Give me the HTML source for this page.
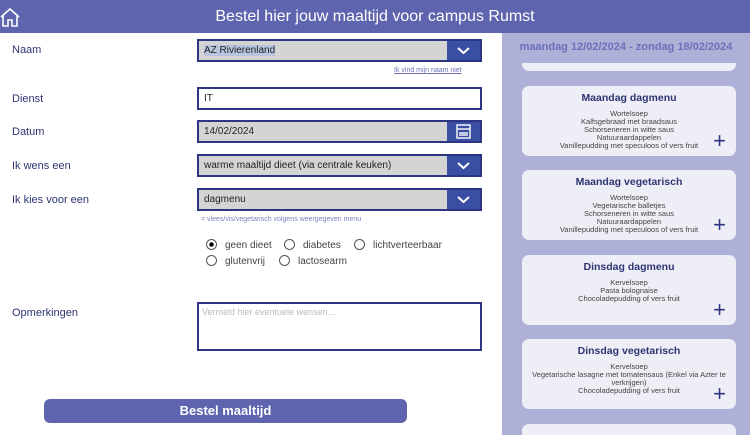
<html><head><style>
html,body{margin:0;width:750px;height:435px;overflow:hidden}
body{background:#fff;font-family:"Liberation Sans",sans-serif;position:relative}
.hdr{position:absolute;left:0;top:0;width:750px;height:33px;background:#5f64ae;color:#fff;font-size:16px;text-align:center;line-height:33px}
.lbl{position:absolute;left:12px;font-size:11px;color:#2e3572}
.box{position:absolute;left:197px;width:285px;height:23px;border:2px solid #2e3583;background:#d4d4d4;font-size:10px;line-height:19px;padding-left:5px;box-sizing:border-box;color:#222}
.btn{position:absolute;right:0;top:0;width:33px;height:19px;background:#3a4ea3}
.rp{position:absolute;left:502px;top:33px;width:248px;height:402px;background:#aeb0d8;overflow:hidden}
.card{position:absolute;left:20px;width:214px;background:#eeeef6;border-radius:7px;text-align:center;color:#444;font-size:7.5px;line-height:8px}
.card b{display:block;color:#2e3572;font-size:10.5px;margin:8px 0 8px}
.plus{position:absolute;right:10px;bottom:4px;font-size:22px;color:#2e3583;line-height:22px}
.r{position:absolute;font-size:10px;color:#444}
.r i{display:inline-block;width:9px;height:9px;border:1px solid #555;border-radius:50%;vertical-align:-2px;margin-right:8px}
</style></head><body>
<div class="hdr">Bestel hier jouw maaltijd voor campus Rumst</div>
<svg style="position:absolute;left:0;top:6px" width="20" height="22" viewBox="0 0 20 22"><path d="M1 11 L10 3 L19 11 M3 9 V20 H8 V14 H12 V20 H17 V9" fill="none" stroke="#fff" stroke-width="1.6"/></svg>
<div class="lbl" style="top:44px">Naam</div>
<div class="box" style="top:39px"><span style="background:#b8c4e0">AZ Rivierenland</span><div class="btn"><svg width="33" height="19"><path d="M11 7 L16.5 12 L22 7" stroke="#fff" stroke-width="2" fill="none"/></svg></div></div>
<div style="position:absolute;left:394px;top:67px;font-size:7px;color:#6b70b8;text-decoration:underline">Ik vind mijn naam niet</div>
<div class="lbl" style="top:93px">Dienst</div>
<div class="box" style="top:87px;background:#fff">IT</div>
<div class="lbl" style="top:126px">Datum</div>
<div class="box" style="top:120px">14/02/2024<div class="btn"><svg width="33" height="19"><rect x="10" y="3" width="13" height="13" fill="none" stroke="#fff" stroke-width="1.4"/><line x1="10" y1="7" x2="23" y2="7" stroke="#fff" stroke-width="1.4"/><rect x="12" y="10" width="9" height="4" fill="#fff" opacity=".7"/></svg></div></div>
<div class="lbl" style="top:160px">Ik wens een</div>
<div class="box" style="top:154px">warme maaltijd dieet (via centrale keuken)<div class="btn"><svg width="33" height="19"><path d="M11 7 L16.5 12 L22 7" stroke="#fff" stroke-width="2" fill="none"/></svg></div></div>
<div class="lbl" style="top:194px">Ik kies voor een</div>
<div class="box" style="top:188px">dagmenu<div class="btn"><svg width="33" height="19"><path d="M11 7 L16.5 12 L22 7" stroke="#fff" stroke-width="2" fill="none"/></svg></div></div>
<div style="position:absolute;left:201px;top:216px;font-size:7px;color:#7a7fc0">= vlees/vis/vegetarisch volgens weergegeven menu</div>
<div class="r" style="left:206px;top:239px"><i style="background:radial-gradient(#000 30%,#fff 40%)"></i>geen dieet</div>
<div class="r" style="left:284px;top:239px"><i></i>diabetes</div>
<div class="r" style="left:354px;top:239px"><i></i>lichtverteerbaar</div>
<div class="r" style="left:206px;top:255px"><i></i>glutenvrij</div>
<div class="r" style="left:279px;top:255px"><i></i>lactosearm</div>
<div class="lbl" style="top:307px">Opmerkingen</div>
<div class="box" style="top:302px;height:49px;background:#fff;line-height:16px;font-size:9px;color:#bbb;padding-left:3px">Vermeld hier eventuele wensen...</div>
<div style="position:absolute;left:44px;top:399px;width:363px;height:24px;background:#5f64ae;border-radius:6px;color:#fff;font-weight:bold;font-size:13px;text-align:center;line-height:24px">Bestel maaltijd</div>
<div class="rp">
<div style="position:absolute;left:0;width:248px;top:8px;text-align:center;color:#6b70b8;font-size:11px;font-weight:bold">maandag 12/02/2024 - zondag 18/02/2024</div>
<div class="card" style="top:30px;height:8px;border-radius:0 0 7px 7px"></div>
<div class="card" style="top:53px;height:70px"><b>Maandag dagmenu</b>Wortelsoep<br>Kalfsgebraad met braadsaus<br>Schorseneren in witte saus<br>Natuuraardappelen<br>Vanillepudding met speculoos of vers fruit<span class="plus">+</span></div>
<div class="card" style="top:137px;height:70px"><b>Maandag vegetarisch</b>Wortelsoep<br>Vegetarische balletjes<br>Schorseneren in witte saus<br>Natuuraardappelen<br>Vanillepudding met speculoos of vers fruit<span class="plus">+</span></div>
<div class="card" style="top:222px;height:70px"><b>Dinsdag dagmenu</b>Kervelsoep<br>Pasta bolognaise<br>Chocoladepudding of vers fruit<span class="plus">+</span></div>
<div class="card" style="top:306px;height:70px"><b>Dinsdag vegetarisch</b>Kervelsoep<br>Vegetarische lasagne met tomatensaus (Enkel via Azter te verkrijgen)<br>Chocoladepudding of vers fruit<span class="plus">+</span></div>
<div class="card" style="top:391px;height:30px"></div>
</div>
</body></html>
